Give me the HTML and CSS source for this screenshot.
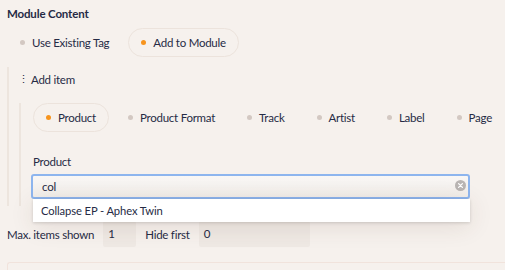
FILE: index.html
```html
<!DOCTYPE html>
<html lang="en">
<head>
    <meta charset="UTF-8">
    <title>Module Content</title>
    <link rel="stylesheet" href="styles.css">
</head>
<body>
    <div class="module">
        <h3 class="title">Module Content</h3>

        <!-- Source -->
        <div class="radios">
            <span class="opt"><i class="dot"></i>Use Existing Tag</span>
            <span class="opt active"><i class="dot"></i>Add to Module</span>
        </div>

        <!-- Items -->
        <div class="items">
            <div class="item-head"><span class="handle">&#8942;</span>Add item</div>
            <div class="item-body">
                <div class="radios">
                    <span class="opt active"><i class="dot"></i>Product</span>
                    <span class="opt"><i class="dot"></i>Product Format</span>
                    <span class="opt"><i class="dot"></i>Track</span>
                    <span class="opt"><i class="dot"></i>Artist</span>
                    <span class="opt"><i class="dot"></i>Label</span>
                    <span class="opt"><i class="dot"></i>Page</span>
                </div>
                <div class="field-label">Product</div>
                <div class="search">
                    <div class="search-input">col
                        <span class="clear">
                            <svg width="11" height="11" viewBox="0 0 11 11">
                                <circle cx="5.5" cy="5.5" r="5.5" fill="#b9b5b3"/>
                                <path d="M3.6 3.6 L7.4 7.4 M7.4 3.6 L3.6 7.4" stroke="#fff" stroke-width="1.3" stroke-linecap="round"/>
                            </svg>
                        </span>
                    </div>
                    <div class="dropdown">Collapse EP - Aphex Twin</div>
                </div>
            </div>
        </div>

        <!-- Limits -->
        <div class="limits">
            <span>Max. items shown</span>
            <span class="box small">1</span>
            <span>Hide first</span>
            <span class="box wide">0</span>
        </div>

        <div class="next-card"></div>
    </div>
</body>
</html>
```

FILE: styles.css
```css
body {
    margin: 0;
    background: #f6f1ed;
    font-family: 'Lato', sans-serif;
    font-size: 11.5px;
    letter-spacing: -0.25px;
    color: #262b45;
    overflow: hidden;
}

.module {
    padding: 6px 0 0 7px;
}

.title {
    margin: 0;
    font-size: 11.5px;
    font-weight: bold;
    line-height: 16px;
    letter-spacing: -0.15px;
}

.radios {
    display: flex;
    gap: 6px;
    margin-top: 6px;
}

.opt {
    display: flex;
    align-items: center;
    height: 27px;
    padding: 0 12px;
    border: 1px solid transparent;
    border-radius: 15px;
    white-space: nowrap;
}

.opt.active {
    border-color: #ece3dc;
}

.dot {
    width: 5px;
    height: 5px;
    border-radius: 50%;
    background: #d3c8c2;
    margin-right: 7px;
}

.opt.active .dot {
    background: #f7941d;
}

.items {
    margin-top: 10px;
    border-left: 2px solid #ede5de;
}

.item-head {
    display: flex;
    align-items: center;
    height: 24px;
    padding-left: 9px;
}

.handle {
    width: 13px;
    font-size: 11px;
}

.item-body {
    margin: 12px 0 0 10px;
    padding: 0 0 7px 12px;
    border-left: 2px solid #ede5de;
}

.item-body .radios {
    margin-top: 0;
}

.field-label {
    margin: 22px 0 0 0;
    line-height: 16px;
}

.search {
    position: relative;
    width: 439px;
    margin: 4px 0 0 -2px;
}

.search-input {
    position: relative;
    height: 21px;
    line-height: 21px;
    padding-left: 9px;
    border: 2px solid #8db5ee;
    border-radius: 3px;
    background: linear-gradient(#f9f7f5, #f1ede9);
}

.clear {
    position: absolute;
    right: 2px;
    top: 4px;
    line-height: 0;
}

.dropdown {
    position: absolute;
    left: 2px;
    right: 0;
    top: 25px;
    height: 23px;
    line-height: 23px;
    padding-left: 8px;
    font-size: 11.2px;
    letter-spacing: -0.1px;
    background: #fff;
    box-shadow: 0 1px 3px rgba(0, 0, 0, 0.15), 0 4px 24px rgba(80, 50, 30, 0.12);
}

.limits {
    display: flex;
    align-items: center;
    gap: 9px;
    margin-top: 15px;
}

.box {
    height: 26px;
    line-height: 26px;
    padding-left: 5px;
    background: #efe9e4;
    border-radius: 2px;
}

.box.small {
    width: 28px;
}

.box.wide {
    width: 106px;
}

.next-card {
    height: 20px;
    margin-top: 15px;
    border: 1px solid #f1e3dc;
    border-right: none;
    border-radius: 3px 0 0 0;
}
```
